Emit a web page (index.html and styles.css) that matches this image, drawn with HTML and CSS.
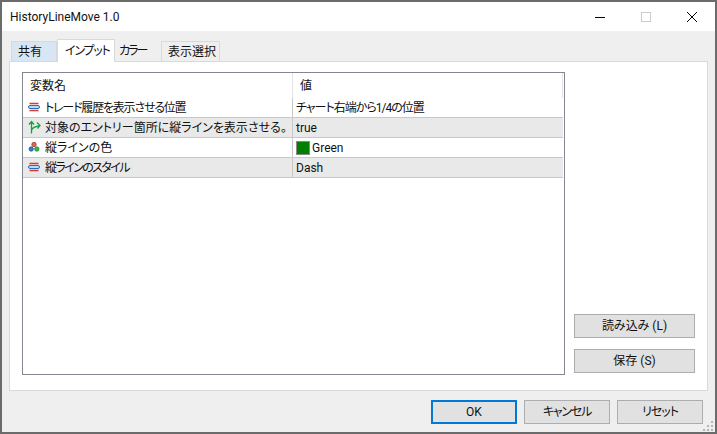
FILE: index.html
```html
<!DOCTYPE html>
<html lang="ja">
<head>
<meta charset="utf-8">
<title>HistoryLineMove 1.0</title>
<link rel="stylesheet" href="styles.css">
</head>
<body>
<div class="window">
  <header class="titlebar">
    <span class="title">HistoryLineMove 1.0</span>
    <div class="controls">
      <span class="ctl"><svg width="12" height="12" viewBox="0 0 12 12"><path d="M1 6.500h10" stroke="#000" stroke-width="1"/></svg></span>
      <span class="ctl"><svg width="12" height="12" viewBox="0 0 12 12"><rect x="1.500" y="1.500" width="9" height="9" fill="none" stroke="#ccc"/></svg></span>
      <span class="ctl"><svg width="12" height="12" viewBox="0 0 12 12"><path d="M1 1l10 10M11 1L1 11" stroke="#000" stroke-width="1" fill="none"/></svg></span>
    </div>
  </header>
  <main class="body">
    <nav class="tabs">
      <span class="tab tab-hover">共有</span>
      <span class="tab tab-active tight-m">インプット</span>
      <span class="tab tab-plain tight-l">カラー</span>
      <span class="tab tab-last">表示選択</span>
    </nav>
    <section class="panel">
      <div class="grid">
        <div class="row head">
          <div class="cell name">変数名</div>
          <div class="cell val">値</div>
        </div>
        <div class="row">
          <div class="cell name tight-m">
            <svg class="ico" width="16" height="16" viewBox="0 0 16 16"><path d="M3.500 4.500h9M3.500 11.500h9" stroke="#e0392b" stroke-width="1.500"/><rect x="2.500" y="6.500" width="11" height="3" rx="1.500" fill="#bcd9f6" stroke="#1f6fc4"/></svg>
            トレード履歴を表示させる位置</div>
          <div class="cell val tight-s">チャート右端から1/4の位置</div>
        </div>
        <div class="row alt">
          <div class="cell name">
            <svg class="ico" width="16" height="16" viewBox="0 0 16 16"><path d="M5.500 14.500V3M3 5.500l2.500-3 2.500 3M5.500 11.500C6 8.500 9 8 14 6.500M11 3.500l3 3-2.500 3" stroke="#12a538" stroke-width="1.300" fill="none"/></svg>
            対象のエントリー箇所に縦ラインを表示させる。</div>
          <div class="cell val">true</div>
        </div>
        <div class="row">
          <div class="cell name">
            <svg class="ico" width="16" height="16" viewBox="0 0 16 16"><circle cx="8" cy="5.500" r="2.200" fill="#e0605a" stroke="#a83a36" stroke-width=".8"/><circle cx="5.200" cy="10" r="2.200" fill="#2f7fd0" stroke="#1d5a9c" stroke-width=".8"/><circle cx="10.800" cy="10" r="2.200" fill="#35b34f" stroke="#1f8a38" stroke-width=".8"/></svg>
            縦ラインの色</div>
          <div class="cell val"><span class="swatch"></span>Green</div>
        </div>
        <div class="row alt">
          <div class="cell name tight-x">
            <svg class="ico" width="16" height="16" viewBox="0 0 16 16"><path d="M3.500 4.500h9M3.500 11.500h9" stroke="#e0392b" stroke-width="1.500"/><rect x="2.500" y="6.500" width="11" height="3" rx="1.500" fill="#bcd9f6" stroke="#1f6fc4"/></svg>
            縦ラインのスタイル</div>
          <div class="cell val">Dash</div>
        </div>
      </div>
      <aside class="side">
        <button class="btn side-btn">読み込み (L)</button>
        <button class="btn side-btn">保存 (S)</button>
      </aside>
    </section>
    <footer class="actions">
      <button class="btn act-btn default">OK</button>
      <button class="btn act-btn tight-m">キャンセル</button>
      <button class="btn act-btn tight-s">リセット</button>
    </footer>
    <svg class="grip" width="12" height="12" viewBox="0 0 12 12"><path d="M8 1h2v2H8zM4 5h2v2H4zM8 5h2v2H8zM0 9h2v2H0zM4 9h2v2H4zM8 9h2v2H8z" fill="#b4b4b4"/></svg>
  </main>
</div>
</body>
</html>
```
FILE: styles.css
```css
* { box-sizing: border-box; }
html, body { margin: 0; padding: 0; }
body {
  width: 717px;
  height: 434px;
  overflow: hidden;
  font-family: "Roboto", "Noto Sans CJK JP", sans-serif;
  font-feature-settings: "palt";
  font-size: 12px;
  color: #111;
  background: #6b6b6b;
}
.window {
  height: 434px;
  padding: 2px;
  display: flex;
  flex-direction: column;
}
.titlebar {
  height: 29px;
  flex: none;
  background: #fff;
  display: flex;
  align-items: center;
  justify-content: space-between;
  padding-left: 8px;
}
.title { font-size: 12px; }
.controls { display: flex; }
.ctl {
  width: 46px;
  height: 29px;
  display: flex;
  align-items: center;
  justify-content: center;
}
.body {
  position: relative;
  flex: 1;
  background: #efefef;
  padding: 8px 7px 0;
  display: flex;
  flex-direction: column;
}
.tabs {
  height: 23px;
  display: flex;
  align-items: flex-end;
  padding-left: 2px;
  position: relative;
  z-index: 1;
  margin-bottom: -1px;
}
.tab {
  height: 20px;
  display: flex;
  align-items: center;
  white-space: nowrap;
  line-height: 1;
  margin-bottom: 1px;
}
.tab-hover { width: 46px; padding-left: 6px; background: #d8e6f4; border: 1px solid #d9d9d9; border-bottom: 0; }
.tab-active { width: 58px; height: 23px; padding-left: 7px; margin-bottom: 0; background: #fff; border: 1px solid #d9d9d9; border-bottom: 0; }
.tab-plain { width: 46px; padding-left: 4px; }
.tab-last { width: 59px; padding-left: 6px; border: 1px solid #d9d9d9; border-bottom: 0; }
.panel {
  height: 330px;
  flex: none;
  background: #fff;
  border: 1px solid #d9d9d9;
  padding: 10px 12px 15px;
  display: flex;
  justify-content: space-between;
}
.grid {
  width: 543px;
  border: 1px solid #828790;
  display: flex;
  flex-direction: column;
}
.row {
  height: 20px;
  flex: none;
  display: flex;
  width: 540px;
  border-bottom: 1px solid #c8c8c8;
}
.row.head { height: 25px; border-bottom: 0; }
.row.alt { background: #e9e9e9; }
.cell {
  display: flex;
  align-items: center;
  white-space: nowrap;
  line-height: 1;
  padding-top: 1px;
}
.head .cell { padding-top: 0; }
.name { width: 270px; padding-left: 22px; border-right: 1px solid #c8c8c8; position: relative; }
.val { flex: 1; padding-left: 3px; }
.head .name { padding-left: 7px; border-right-color: #e4e4e4; }
.head .val { padding-left: 7px; border-right: 1px solid #e4e4e4; }
.ico { position: absolute; left: 3px; top: 1px; }
.swatch {
  width: 14px;
  height: 14px;
  background: #008000;
  border: 1px solid #8a8a8a;
  margin-right: 2px;
}
.side {
  width: 121px;
  display: flex;
  flex-direction: column;
  justify-content: flex-end;
  gap: 11px;
  padding-bottom: 2px;
}
.btn {
  font: inherit;
  font-feature-settings: "palt";
  color: #111;
  background: #e1e1e1;
  border: 1px solid #adadad;
  padding: 0 0 1px;
  height: 24px;
  line-height: 1;
}
.actions {
  display: flex;
  justify-content: flex-end;
  gap: 7px;
  padding-top: 9px;
  padding-right: 5px;
}
.act-btn { width: 86px; }
.default { border: 2px solid #0078d7; }
.tight-s { letter-spacing: -1px; }
.tight-m { letter-spacing: -1.2px; }
.tight-x { letter-spacing: -1.6px; }
.tight-l { letter-spacing: -2px; }
.grip { position: absolute; right: 0; bottom: 0; }
```
